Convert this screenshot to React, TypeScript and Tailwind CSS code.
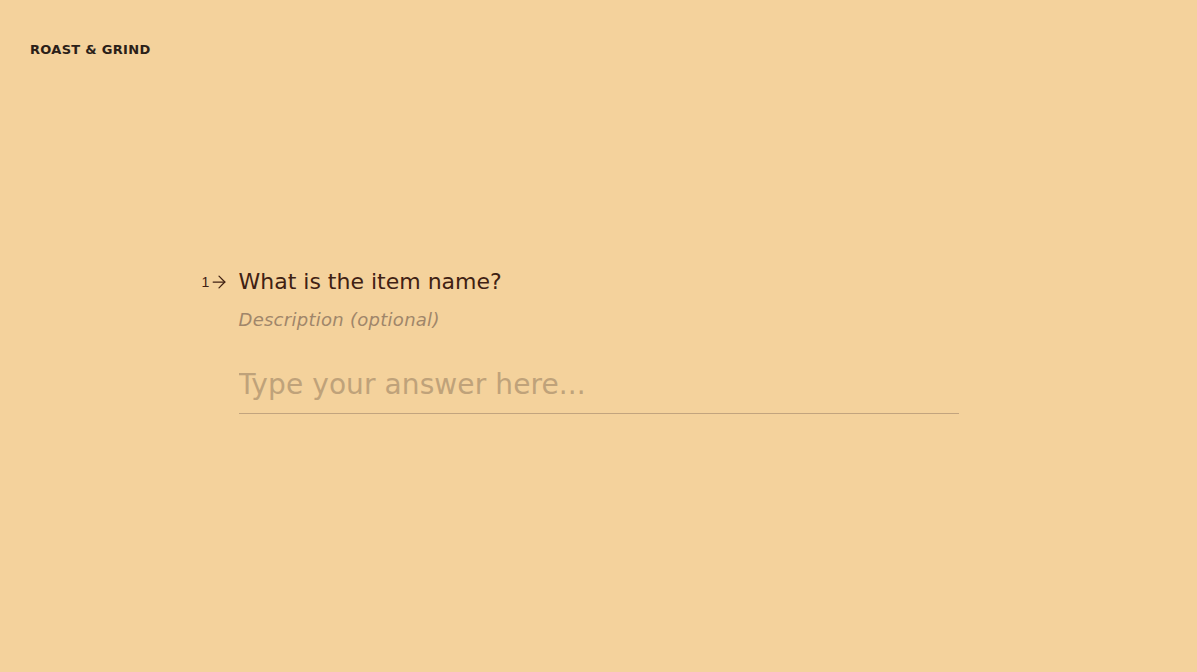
import { ArrowRight } from 'lucide-react'

export default function App() {
  return (
    <div className="h-[672px] overflow-hidden bg-[#f4d29c] font-['DejaVu_Sans',sans-serif] text-[#3f2113]">
      <header className="px-[30px] pt-[42px]">
        <span className="block text-[13px] leading-[16px] font-bold tracking-[0.3px] text-[#2a2018]">
          ROAST &amp; GRIND
        </span>
      </header>
      <main className="mx-auto mt-[208px] flex w-[720px] flex-col">
        <div className="relative">
          <div className="absolute top-[6px] left-[-37px] flex h-[20px] items-center text-[#3f2113]">
            <span className="font-['Liberation_Sans',sans-serif] text-[14px] leading-[16px]">1</span>
            <ArrowRight size={20} strokeWidth={1.5} />
          </div>
          <h1 className="text-[22px] leading-[32px] font-normal">What is the item name?</h1>
        </div>
        <p className="mt-[10px] text-[18px] leading-[24px] tracking-[0.27px] text-[#a0866a] italic">
          Description (optional)
        </p>
        <input
          type="text"
          placeholder="Type your answer here..."
          className="mt-[33px] w-full border-b border-[#c2a47e] bg-transparent pb-[8px] text-[28px] leading-[40px] tracking-[0.1px] outline-none placeholder:text-[#bfa27a]"
        />
      </main>
    </div>
  )
}
